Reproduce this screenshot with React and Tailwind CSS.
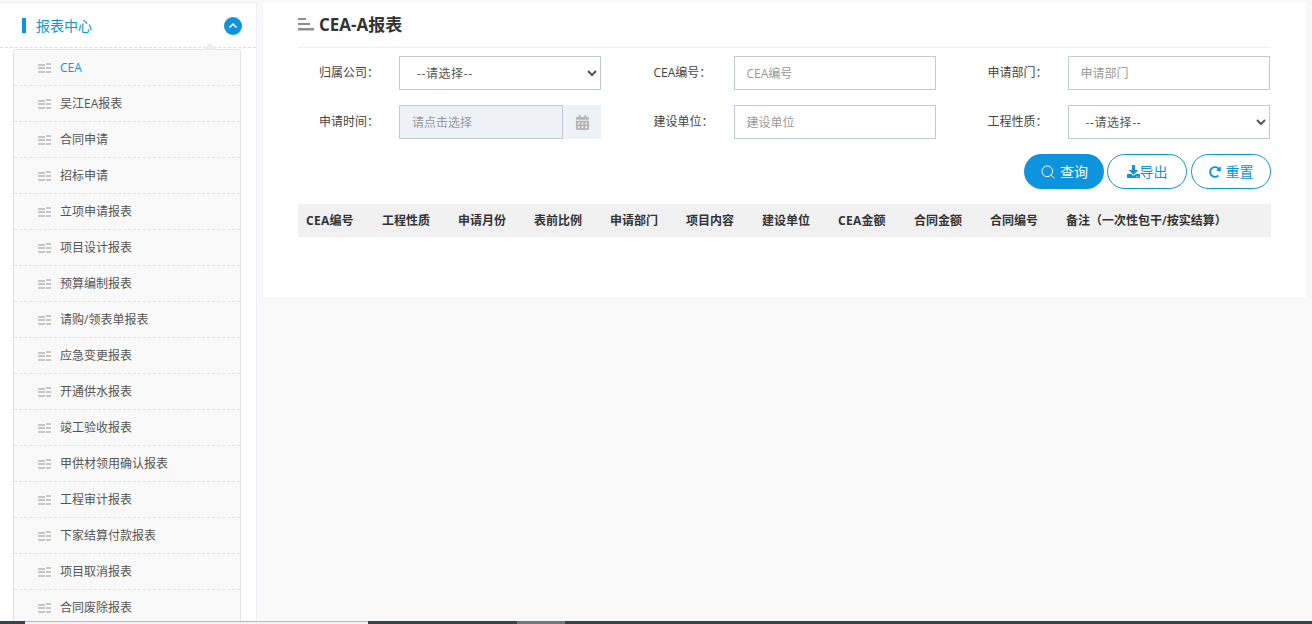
import React from 'react';
import { Search } from 'lucide-react';
import { FaCalendarAlt, FaDownload, FaRedoAlt } from 'react-icons/fa';

const items = ['CEA','吴江EA报表','合同申请','招标申请','立项申请报表','项目设计报表','预算编制报表','请购/领表单报表','应急变更报表','开通供水报表','竣工验收报表','甲供材领用确认报表','工程审计报表','下家结算付款报表','项目取消报表','合同废除报表'];
const cols = ['工程性质','申请月份','表前比例','申请部门','项目内容','建设单位'];
const cols2 = ['合同金额','合同编号','备注（一次性包干/按实结算）'];

function MenuIcon() {
  return (
    <svg width="14" height="10" viewBox="0 0 14 10" className="shrink-0" fill="#c6c6c6">
      <rect x="0" y="1" width="7" height="2" /><rect x="8" y="0" width="5" height="2" />
      <rect x="0" y="4" width="7" height="2" /><rect x="8" y="4" width="5" height="2" />
      <rect x="0" y="8" width="7" height="2" /><rect x="8" y="8" width="5" height="2" />
    </svg>
  );
}

function Label({ children }) {
  return <label className="w-[80px] shrink-0 text-xs text-[#444]">{children}</label>;
}
const inputCls = 'w-[202px] h-[34px] border border-[#c2cad8] bg-white px-3 text-xs text-[#555] placeholder:text-[#999] outline-none';
const selectCls = 'w-[202px] h-[34px] border border-[#c2cad8] bg-white pl-[13px] pr-3 text-xs tracking-[0.6px] text-[#555] outline-none';

function Field({ label, children }) {
  return <div className="flex items-center pl-[21px]"><Label>{label}</Label>{children}</div>;
}
function Sel() {
  return <select className={selectCls}><option>--请选择--</option></select>;
}
function Cea({ suffix }) {
  return <div className="w-[76px] shrink-0 whitespace-nowrap"><span className="font-bold tracking-[0.3px]">CEA</span>{suffix}</div>;
}

export default function App() {
  return (
    <div className="w-[1312px] h-[624px] overflow-hidden flex flex-col bg-[#f9f9f9]" style={{ fontFamily: '"Open Sans","Noto Sans CJK SC",sans-serif' }}>
      <div className="flex-1 min-h-0 flex">
        <aside className="w-[257px] shrink-0 mt-[2px] bg-white border-t border-r border-[#eef0f6] overflow-hidden">
          <div className="relative h-[45px] border-b border-dashed border-[#ddd] flex items-center pt-px pl-[22px] pr-[14px]">
            <span className="w-1 h-[15px] bg-[#0e94dc]" />
            <span className="ml-[10px] text-sm text-[#0e94dc]">报表中心</span>
            <span className="ml-auto w-[18px] h-[18px] rounded-full bg-[#0e94dc] flex items-center justify-center">
              <svg width="12" height="12" viewBox="0 0 12 12" fill="none" stroke="#fff" strokeWidth="1.5"><path d="M2.5 7.5 6 4 9.5 7.5" /></svg>
            </span>
            <span className="absolute left-[203px] top-[40px] w-0 h-0 border-x-[7px] border-x-transparent border-b-[7px] border-b-[#ececec]" />
          </div>
          <ul className="mt-px ml-[13px] w-[228px] border border-[#e3e3e3] rounded-t-[3px] bg-[#f9f9f9]">
            {items.map((t, i) => (
              <li key={t} className={'h-[36px] flex items-center pl-6 gap-2 text-xs border-b border-dashed border-[#e3e3e3] ' + (i === 0 ? 'text-[#0e94dc]' : 'text-[#555]')}>
                <MenuIcon /><span>{t}</span>
              </li>
            ))}
          </ul>
        </aside>
        <div className="w-[6px] shrink-0" />
        <main className="w-[1043px] h-[295px] mt-[2px] bg-white pl-[35px] pr-[35px]">
          <div className="h-[46px] border-b border-[#eee] flex items-center gap-[5px]">
            <svg width="16" height="13" viewBox="0 0 16 13" fill="#8f8f8f"><rect x="0" y="0" width="8" height="2" /><rect x="0" y="5" width="12" height="2" /><rect x="0" y="10" width="16" height="2.5" /></svg>
            <h1 className="text-[17px] font-bold text-[#333]">CEA-A报表</h1>
          </div>
          <div className="mt-2 grid grid-cols-[334.5px_334px_304px] gap-y-[15px]">
            <Field label="归属公司："><Sel /></Field>
            <Field label="CEA编号："><input className={inputCls} placeholder="CEA编号" /></Field>
            <Field label="申请部门："><input className={inputCls} placeholder="申请部门" /></Field>
            <Field label="申请时间：">
              <div className="flex w-[202px] h-[34px]">
                <input disabled className="w-[164px] h-[34px] border border-[#c2cad8] bg-[#eef1f5] px-3 pt-px text-xs placeholder:text-[#999] outline-none" placeholder="请点击选择" />
                <span className="flex-1 bg-[#eef1f5] flex items-center justify-center text-[#b5b5b5] text-[15px]"><FaCalendarAlt /></span>
              </div>
            </Field>
            <Field label="建设单位："><input className={inputCls} placeholder="建设单位" /></Field>
            <Field label="工程性质："><Sel /></Field>
          </div>
          <div className="mt-[15px] flex justify-end gap-[3px]">
            <button className="w-[80px] h-[35px] rounded-full bg-[#0e94dc] text-white text-sm flex items-center justify-center gap-1"><Search size={16} strokeWidth={1.5} />查询</button>
            <button className="w-[80px] h-[35px] rounded-full border border-[#0e94dc] text-[#0e94dc] text-sm flex items-center justify-center"><FaDownload size={13} />导出</button>
            <button className="w-[80px] h-[35px] rounded-full border border-[#0e94dc] text-[#0e94dc] text-sm flex items-center justify-center gap-[5px] ml-px"><FaRedoAlt size={12} />重置</button>
          </div>
          <div className="mt-[15px] h-[33px] bg-[#f1f1f1] flex items-center pl-2 pt-px text-xs font-semibold text-[#333]">
            <Cea suffix="编号" />
            {cols.map((c) => <div key={c} className="w-[76px] shrink-0 whitespace-nowrap">{c}</div>)}
            <Cea suffix="金额" />
            {cols2.map((c) => <div key={c} className="w-[76px] shrink-0 whitespace-nowrap">{c}</div>)}
          </div>
        </main>
      </div>
      <div className="h-[3px] shrink-0 flex bg-[#35464a]">
        <div className="ml-[25px] w-[343px] bg-[#f4f4f4] border-t border-[#bbb]" />
        <div className="ml-[149px] w-[48px] bg-[#6d7b7e]" />
      </div>
    </div>
  );
}
